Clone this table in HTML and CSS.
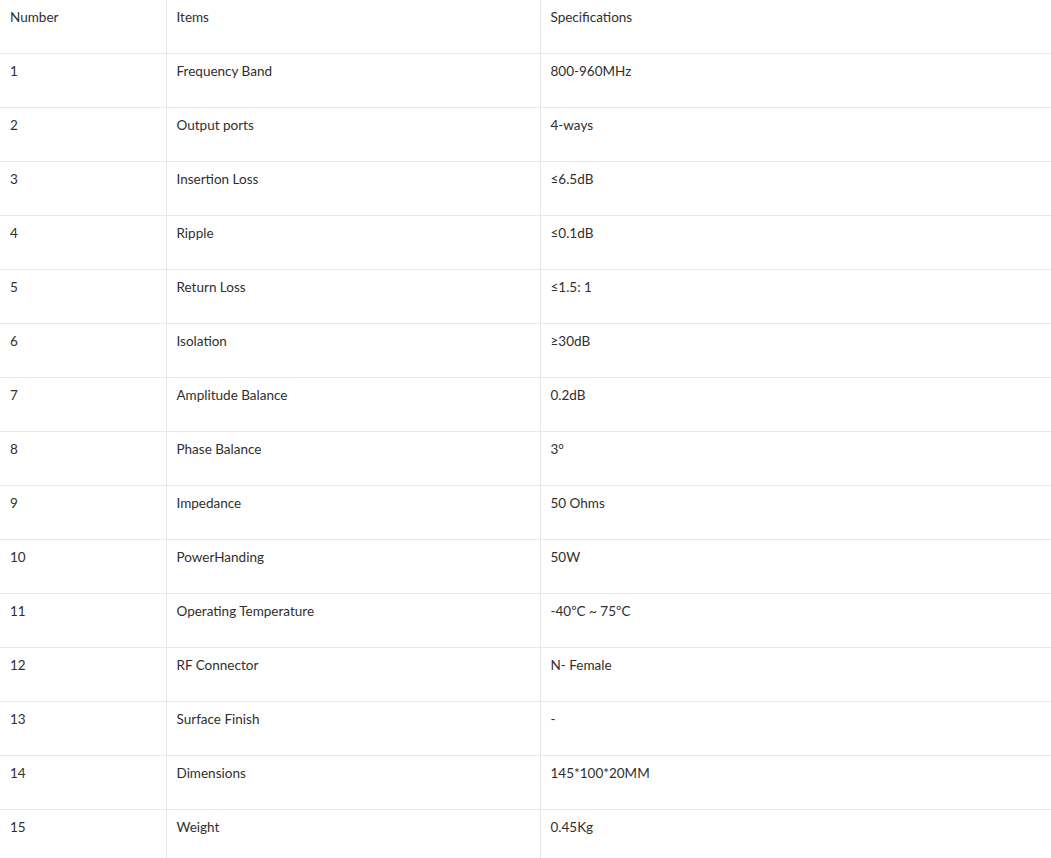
FILE: index.html
```html
<!DOCTYPE html>
<html>
<head>
<meta charset="utf-8">
<link rel="stylesheet" href="styles.css">
</head>
<body>
<table class="spec">
  <colgroup><col class="c1"><col class="c2"><col class="c3"></colgroup>
  <tr class="head"><td>Number</td><td>Items</td><td>Specifications</td></tr>
  <tr><td>1</td><td>Frequency Band</td><td>800-960MHz</td></tr>
  <tr><td>2</td><td>Output ports</td><td>4-ways</td></tr>
  <tr><td>3</td><td>Insertion Loss</td><td>≤6.5dB</td></tr>
  <tr><td>4</td><td>Ripple</td><td>≤0.1dB</td></tr>
  <tr><td>5</td><td>Return Loss</td><td>≤1.5: 1</td></tr>
  <tr><td>6</td><td>Isolation</td><td>≥30dB</td></tr>
  <tr><td>7</td><td>Amplitude Balance</td><td>0.2dB</td></tr>
  <tr><td>8</td><td>Phase Balance</td><td>3°</td></tr>
  <tr><td>9</td><td>Impedance</td><td>50 Ohms</td></tr>
  <tr><td>10</td><td>PowerHanding</td><td>50W</td></tr>
  <tr><td>11</td><td>Operating Temperature</td><td>-40ºC ~ 75ºC</td></tr>
  <tr><td>12</td><td>RF Connector</td><td>N- Female</td></tr>
  <tr><td>13</td><td>Surface Finish</td><td>-</td></tr>
  <tr><td>14</td><td>Dimensions</td><td>145*100*20MM</td></tr>
  <tr><td>15</td><td>Weight</td><td>0.45Kg</td></tr>
</table>
</body>
</html>
```
FILE: styles.css
```css
html, body { margin: 0; padding: 0; background: #fff; }
body { font-family: Lato, "Open Sans", sans-serif; font-size: 13.5px; color: #2f2f2f; }
.spec { border-collapse: collapse; width: 1051px; table-layout: fixed; }
.c1 { width: 166px; }
.c2 { width: 374px; }
.c3 { width: 511px; }
.spec td {
  height: 54px;
  box-sizing: border-box;
  padding: 7px 10px;
  vertical-align: top;
  line-height: 20px;
  border-bottom: 1px solid #e8e8e8;
  border-left: 1px solid #e8e8e8;
}
.spec .head td { height: 53px; }
.spec td:first-child { border-left: none; }
```
